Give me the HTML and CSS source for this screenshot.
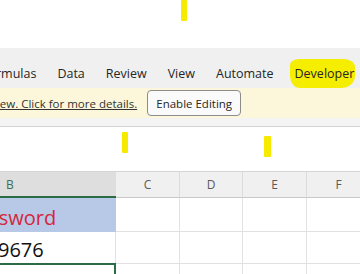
FILE: index.html
```html
<!DOCTYPE html>
<html>
<head>
<meta charset="utf-8">
<link rel="stylesheet" href="styles.css">
</head>
<body>
<div class="page">
  <div class="top"></div>
  <nav class="tabs">
    <span class="tab first">Formulas</span>
    <span class="tab">Data</span>
    <span class="tab">Review</span>
    <span class="tab">View</span>
    <span class="tab">Automate</span>
    <span class="tab dev">Developer</span>
  </nav>
  <div class="msgbar">
    <a class="msg">View. Click for more details.</a>
    <button class="btn">Enable Editing</button>
  </div>
  <div class="sep"></div>
  <div class="formula"></div>
  <div class="grid">
    <div class="hd sel">B</div>
    <div class="hd">C</div>
    <div class="hd">D</div>
    <div class="hd">E</div>
    <div class="hd">F</div>

    <div class="cell title"><span class="cut-title">Password</span></div>
    <div class="cell"></div>
    <div class="cell"></div>
    <div class="cell"></div>
    <div class="cell"></div>

    <div class="cell num"><span class="cut-num">9676</span></div>
    <div class="cell"></div>
    <div class="cell"></div>
    <div class="cell"></div>
    <div class="cell"></div>

    <div class="cell active"></div>
    <div class="cell"></div>
    <div class="cell"></div>
    <div class="cell"></div>
    <div class="cell"></div>
  </div>

  <span class="mark m1"></span>
  <span class="mark m2"></span>
  <span class="mark m3"></span>
  <span class="hilite"></span>
</div>
</body>
</html>
```
FILE: styles.css
```css
html, body {
  margin: 0;
  padding: 0;
  background: #fff;
}

.page {
  width: 360px;
  height: 274px;
  overflow: hidden;
  position: relative;
  background: #fff;
  font-family: "Open Sans", "Noto Sans", sans-serif;
  color: #262626;
}

.top {
  height: 48px;
}

.tabs {
  box-sizing: border-box;
  height: 40px;
  padding-top: 10px;
  background: #f0f0f0;
  display: flex;
  align-items: center;
  gap: 21px;
  white-space: nowrap;
}

.tab {
  font-size: 12.5px;
  color: #262626;
  position: relative;
  z-index: 2;
}

.tab.first {
  margin-left: -18px;
}

.msgbar {
  height: 30px;
  background: #fcf7da;
  display: flex;
  align-items: center;
  gap: 10px;
  white-space: nowrap;
}

.msg {
  font-size: 11.5px;
  color: #333;
  text-decoration: underline;
  margin-left: -10px;
}

.btn {
  box-sizing: border-box;
  width: 94px;
  height: 26px;
  border: 1px solid #8c8c8c;
  border-radius: 4px;
  background: #fafafa;
  font-family: "Open Sans", "Noto Sans", sans-serif;
  font-size: 11.5px;
  color: #262626;
  padding: 0;
}

.sep {
  height: 8px;
  background: #f4f4f4;
  border-bottom: 1px solid #d4d4d4;
}

.formula {
  height: 44px;
  border-bottom: 1px solid #d4d4d4;
}

.grid {
  display: grid;
  grid-template-columns: 116px 64px 63px 64px 64px;
  grid-template-rows: 26px 34px 32px 20px;
}

.hd {
  box-sizing: border-box;
  background: #f0f0f0;
  border-bottom: 1px solid #c8c8c8;
  border-right: 1px solid #dcdcdc;
  font-size: 12px;
  color: #5a5a5a;
  display: flex;
  align-items: center;
  justify-content: center;
}

.hd.sel {
  background: #dedede;
  border-bottom: 2px solid #2b6b45;
  border-right: none;
  justify-content: flex-start;
  padding-left: 6px;
  color: #3f6f50;
}

.cell {
  box-sizing: border-box;
  border-right: 1px solid #e1e1e1;
  border-bottom: 1px solid #e1e1e1;
  display: flex;
  align-items: flex-end;
  overflow: hidden;
  white-space: nowrap;
}

.cell.title {
  background: #b7c9e6;
  border-right: none;
  border-bottom: none;
}

.cut-title {
  font-size: 20px;
  color: #d5263c;
  margin-left: -34px;
  padding-bottom: 1px;
}

.cell.num {
  border-bottom: none;
}

.cut-num {
  font-size: 20px;
  color: #111;
  margin-left: -2px;
  padding-bottom: 1px;
}

.cell.active {
  border-top: 2px solid #2b6b45;
  border-right: 2px solid #2b6b45;
  margin-top: -1px;
}

.mark {
  position: absolute;
  width: 6px;
  background: #f5ea00;
  border-radius: 1px;
}

.m1 { left: 181px; top: 0; height: 21px; }
.m2 { left: 122px; top: 132px; height: 21px; }
.m3 { left: 264px; top: 136px; height: 21px; width: 7px; }

.hilite {
  position: absolute;
  left: 290px;
  top: 59px;
  width: 65px;
  height: 29px;
  background: #f5ee00;
  border-radius: 9px 12px 14px 10px / 6px 8px 12px 12px;
  z-index: 1;
}
```
